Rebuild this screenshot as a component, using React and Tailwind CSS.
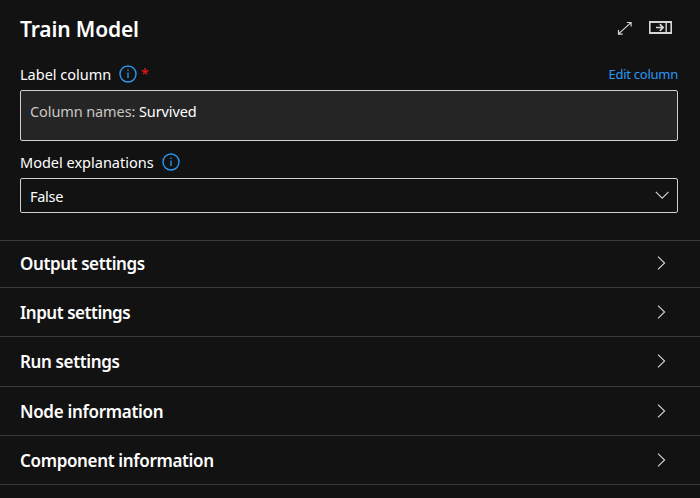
const sections = [
  { title: "Output settings", row: "h-[47px] pb-px", track: "tracking-[-0.4px]" },
  { title: "Input settings", row: "h-[49px] pt-px", track: "tracking-[-0.47px]" },
  { title: "Run settings", row: "h-[50px]", track: "tracking-[-0.36px]" },
  { title: "Node information", row: "h-[49px] pt-px", track: "tracking-[-0.3px]" },
  { title: "Component information", row: "h-[49px] pt-px", track: "tracking-[-0.34px]" },
];

function InfoIcon() {
  return (
    <svg className="h-[18px] w-[18px] shrink-0" viewBox="0 0 18 18" fill="none">
      <circle cx="9" cy="9" r="8" stroke="#2899f5" strokeWidth="1.4" />
      <path d="M9 7.5V13M9 4.6V6" stroke="#2899f5" strokeWidth="1.3" />
    </svg>
  );
}

function ExpandIcon() {
  return (
    <svg className="h-[14px] w-[15px]" viewBox="0 0 15 14" fill="none" stroke="#d6d6d6" strokeWidth="1.2">
      <path d="M1.6 12.9L13.9 1.6M9.9 1.5H14.1V5.5M1.5 9V13.1H5.7" />
    </svg>
  );
}

function DockIcon() {
  return (
    <svg className="h-[13px] w-[23px]" viewBox="0 0 23 13" fill="none" stroke="#d6d6d6">
      <path d="M0 1H23M0 12H23" strokeWidth="2" />
      <path d="M0.8 0V13M22.2 0V13" strokeWidth="1.6" />
      <path d="M17.2 1V12" strokeWidth="1.4" />
      <path d="M7 6.5H14M10.8 3.2L14.1 6.5L10.8 9.8" strokeWidth="1.7" />
    </svg>
  );
}

export default function App() {
  return (
    <div className="flex h-[498px] w-[700px] flex-col overflow-hidden bg-[#121212] font-['Noto_Sans','Open_Sans',sans-serif] text-[14.5px] text-white">
      <header className="flex h-[62px] shrink-0 items-start pl-5 pr-7">
        <h1 className="mt-[14px] flex-1 text-[21px] font-semibold leading-[30px] tracking-[-0.15px]">Train Model</h1>
        <div className="mt-[21px] flex gap-[17px]">
          <ExpandIcon />
          <DockIcon />
        </div>
      </header>
      <div className="flex h-[28px] shrink-0 items-start pl-5 pr-[22px]">
        <span className="mt-[2px] w-[90px] whitespace-nowrap leading-5">Label column</span>
        <span className="ml-[9px] mt-[3px]"><InfoIcon /></span>
        <span className="ml-[4px] mt-[2px] text-[14px] leading-5 text-[#f1171b]">*</span>
        <a className="ml-auto mt-[2px] text-[13px] leading-5 tracking-[-0.25px] text-[#2899f5]">Edit column</a>
      </div>
      <div className="ml-5 mr-[22px] h-[51px] shrink-0 rounded-[2px] border border-[#d0d0d0] bg-[#252525] pl-[9px] pt-[10px] leading-5 tracking-[-0.1px]">
        <span className="text-[#c8c6c4]">Column names:</span> Survived
      </div>
      <div className="flex h-[37px] shrink-0 items-start px-5 pt-[11px]">
        <span className="w-[133px] whitespace-nowrap leading-5">Model explanations</span>
        <span className="ml-[9px] mt-px"><InfoIcon /></span>
      </div>
      <div className="ml-5 mr-[22px] flex h-[35px] shrink-0 items-center justify-between rounded-[2px] border border-[#d0d0d0] pl-[9px] pr-[8px]">
        <span className="pt-px leading-5 tracking-[-0.3px]">False</span>
        <svg className="mb-px h-[8px] w-[14px]" viewBox="0 0 14 8" fill="none" stroke="#d6d6d6" strokeWidth="1.1">
          <path d="M0.8 0.9L7.2 7.2L13.5 0.9" />
        </svg>
      </div>
      <div className="mt-[27px] shrink-0 border-b border-[#3b3b3b]">
        {sections.map((s) => (
          <div key={s.title} className={`flex items-center justify-between border-t border-[#3b3b3b] pl-5 pr-[34px] ${s.row}`}>
            <h2 className={`text-[17px] font-semibold leading-6 ${s.track}`}>{s.title}</h2>
            <svg className="mb-[2px] h-[14px] w-[9px]" viewBox="0 0 9 14" fill="none" stroke="#d6d6d6" strokeWidth="1.1">
              <path d="M1 0.6L7.6 7L1 13.4" />
            </svg>
          </div>
        ))}
      </div>
    </div>
  );
}
